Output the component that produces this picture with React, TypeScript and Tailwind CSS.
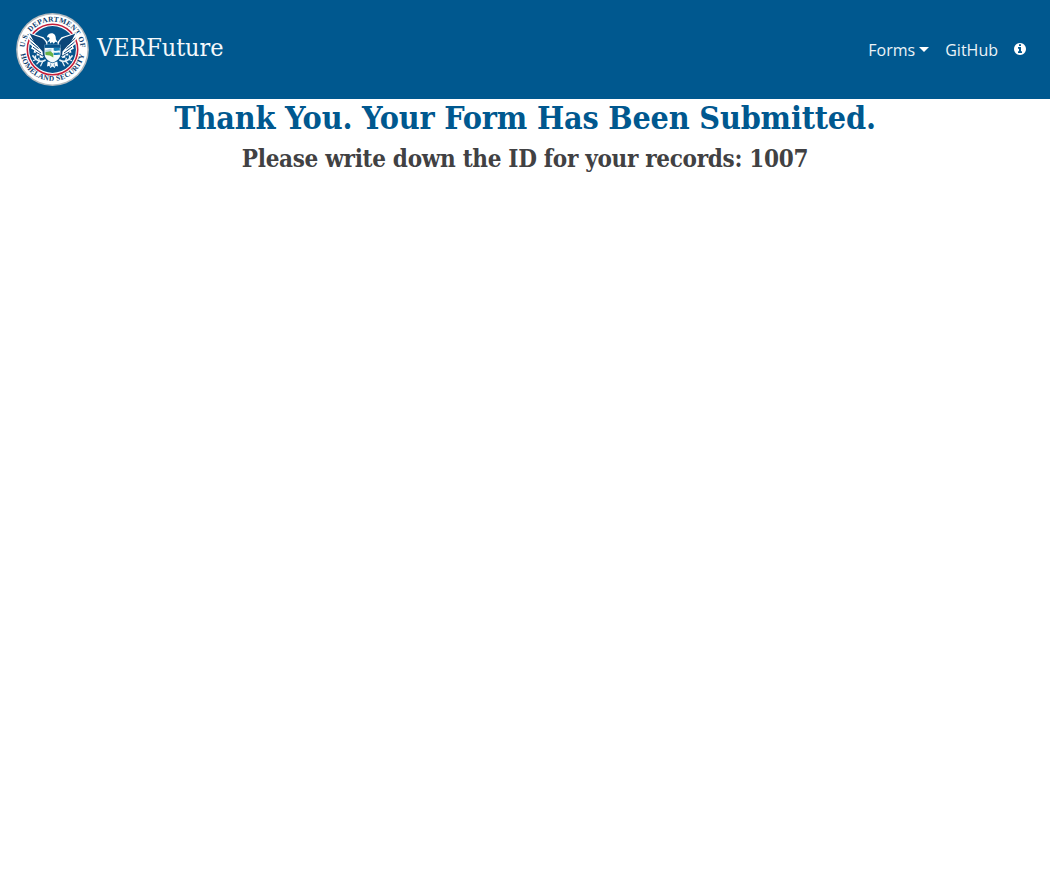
import React from "react";

function WingHalf() {
  return (
    <g>
      {/* spread feathers */}
      <path
        fill="#fff"
        d="M-24.5 -17.5L-16 -14.5L-9 -12.2L-5 -7.5L-6 4L-10 8.5L-13 8L-12.5 6L-16 6L-15.5 3.8L-19 3L-18.2 .8L-21.5 -1L-20.3 -3.2L-23.5 -6L-22 -8L-25 -11.5L-22.8 -12.8Z"
      />
      {/* shoulder and long feather bands */}
      <path
        fill="#0b4578"
        d="M-23 -16.2C-18 -13.2 -12 -13 -8.5 -9.8C-6.2 -7.5 -5.6 -4.5 -5.9 -1L-6.6 6.5L-9.4 7L-10 2L-14.2 -2.8L-18.7 -8Z"
      />
      <path
        fill="none"
        stroke="#0b4578"
        strokeWidth="1"
        d="M-22.8 -11.5L-15.5 -4.6M-22 -7.4L-14 -1M-19.5 -2.4L-11.5 3.5M-17 2.4L-9.5 6.6"
      />
    </g>
  );
}

function Seal() {
  return (
    <svg className="h-[73px] w-[73px] shrink-0" viewBox="-36.5 -36.5 73 73" aria-label="Department seal">
      <defs>
        <path id="arc-upper" d="M-27.57 4.86A28 28 0 1 1 27.57 4.86" />
        <path id="arc-lower" d="M-32.4 -1A32.4 32.4 0 0 0 32.4 -1" />
      </defs>
      <circle r="36.4" fill="#b5bbc0" />
      <circle r="34.9" fill="#fff" />
      <circle r="25.2" fill="#fff" stroke="#c4203b" strokeWidth="1.6" />
      <circle r="23.4" fill="#07548c" />
      <g fill="#0c3d6e" fontFamily="Liberation Serif, serif" fontWeight="700" fontSize="7.4">
        <text>
          <textPath href="#arc-upper" startOffset="7" textLength="84" lengthAdjust="spacing">U.S. DEPARTMENT OF</textPath>
        </text>
        <text>
          <textPath href="#arc-lower" startOffset="5.5" textLength="90" lengthAdjust="spacing">HOMELAND SECURITY</textPath>
        </text>
      </g>
      <WingHalf />
      <g transform="scale(-1 1)">
        <WingHalf />
      </g>
      {/* head and neck */}
      <path fill="#fff" d="M-5.6 -12.3C-5 -15.8 -1.5 -17 1 -15.8C3.2 -14.8 3.3 -12.3 3.4 -10.2L5.2 -7L2.8 -7.7L1.2 -5.8L-.3 -7.6L-2.3 -6L-2.7 -8.2L-5.2 -7.3L-2.8 -10.8L-3.6 -12.2Z" />
      {/* shield */}
      <path d="M-8 -4.8H8V4C8 8.7 4.5 11.6 0 13C-4.5 11.6 -8 8.7 -8 4Z" fill="#f4fafc" />
      <path d="M-8 -4.8H8V-1.6H-8Z" fill="#07548c" />
      <path d="M-7.3 .8L-1 -1V6.8L-4 4.8L-7.2 4.2Z" fill="#b8d6e5" />
      <path d="M-7.2 2.8L-2 1.8L.8 4.2V8L-2.7 6L-7 5.5Z" fill="#67b346" />
      <path d="M1.2 -1.4H7.3V1.3C5.3 .5 3.5 2 1.2 1.1ZM1.2 3C3.5 3.9 5.3 2.5 7.3 3.2V5.4C5.2 4.5 3.4 6.2 1.2 5.4Z" fill="#1781b6" />
      {/* tail */}
      <path fill="#fff" d="M-4.8 12L0 13.8L4.8 12L5.5 17L3.2 16.2L2.2 18.5L0 17L-2.2 18.5L-3.2 16.2L-5.5 17Z" />
      <path fill="none" stroke="#07548c" strokeWidth=".6" d="M-1.8 14V17M1.8 14V17" />
      {/* olive branch and arrows */}
      <g fill="none" stroke="#e9f2f7" strokeLinecap="round">
        <path strokeWidth="1.8" d="M-7.5 10.8C-12 13.5 -16 11 -19.5 6.5M7.5 10.8C12 13.5 16 11 19.5 6.5" />
        <path strokeWidth="1.3" d="M-10 12.5L-11.8 16.2M-13.5 12.2L-15.6 14.4M-16.5 10L-19 11M-13 12L-13.8 8.8M-17 9.3L-17 6.5M10 12.5L11.8 16.2M13.5 12.2L15.6 14.4M16.5 10L19 11M13 12L13.8 8.8M17 9.3L17 6.5" />
      </g>
    </svg>
  );
}

function InfoIcon() {
  return (
    <svg className="-mt-px h-3 w-3" viewBox="128 128 1536 1536" fill="currentColor" aria-hidden="true">
      <path d="M1152 1376v-160q0-14-9-23t-23-9h-96v-512q0-14-9-23t-23-9h-320q-14 0-23 9t-9 23v160q0 14 9 23t23 9h96v320h-96q-14 0-23 9t-9 23v160q0 14 9 23t23 9h448q14 0 23-9t9-23zm-128-896v-160q0-14-9-23t-23-9h-192q-14 0-23 9t-9 23v160q0 14 9 23t23 9h192q14 0 23-9t9-23zm640 416q0 209-103 385.5t-279.5 279.5-385.5 103-385.5-103-279.5-279.5-103-385.5 103-385.5 279.5-279.5 385.5-103 385.5 103 279.5 279.5 103 385.5z" />
    </svg>
  );
}

export default function App() {
  return (
    <div className="min-h-screen bg-white font-['Open_Sans',sans-serif]">
      <nav className="flex h-[99px] items-center justify-between bg-[#00588f] px-4 text-base text-white">
        <a className="flex items-center gap-2" href="#">
          <Seal />
          <span className="-mt-1 whitespace-nowrap font-['DejaVu_Serif_Condensed','DejaVu_Serif',serif] text-[25px] leading-[30px] tracking-[-0.1px] text-[#f4f8fb]">
            VERFuture
          </span>
        </a>
        <ul className="flex items-center">
          <li className="flex items-center gap-1 pr-2 text-[#ecf3f7]">
            Forms
            <span className="h-0 w-0 border-x-[5px] border-t-[5px] border-x-transparent border-t-white" />
          </li>
          <li className="px-2 text-[#ecf3f7]">GitHub</li>
          <li className="px-2">
            <InfoIcon />
          </li>
        </ul>
      </nav>
      <main className="text-center font-['DejaVu_Serif_Condensed','DejaVu_Serif',serif] font-bold">
        <h1 className="whitespace-nowrap text-[32px] leading-[38px] tracking-[-0.18px] text-[#00588f]">
          Thank You. Your Form Has Been Submitted.
        </h1>
        <h2 className="mt-[7px] whitespace-nowrap text-[24px] leading-[29px] tracking-[-0.3px] text-[#414143]">
          Please write down the ID for your records: 1007
        </h2>
      </main>
    </div>
  );
}
